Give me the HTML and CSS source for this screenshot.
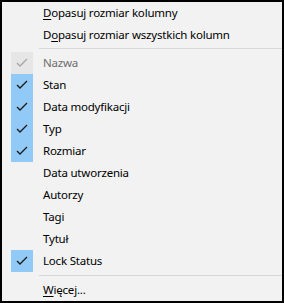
FILE: index.html
```html
<!DOCTYPE html>
<html>
<head>
<meta charset="utf-8">
<link rel="stylesheet" href="styles.css">
</head>
<body>
<div class="menu">
  <div class="item"><span class="check"></span><span class="label"><u>D</u>opasuj rozmiar kolumny</span></div>
  <div class="item"><span class="check"></span><span class="label">D<u>o</u>pasuj rozmiar wszystkich kolumn</span></div>
  <div class="sep"></div>
  <div class="item disabled"><span class="check on"><svg width="22" height="22" viewBox="0 0 22 22"><polyline points="6,11 9,14 16,7" /></svg></span><span class="label">Nazwa</span></div>
  <div class="item"><span class="check on"><svg width="22" height="22" viewBox="0 0 22 22"><polyline points="6,11 9,14 16,7" /></svg></span><span class="label">Stan</span></div>
  <div class="item"><span class="check on"><svg width="22" height="22" viewBox="0 0 22 22"><polyline points="6,11 9,14 16,7" /></svg></span><span class="label">Data modyfikacji</span></div>
  <div class="item"><span class="check on"><svg width="22" height="22" viewBox="0 0 22 22"><polyline points="6,11 9,14 16,7" /></svg></span><span class="label">Typ</span></div>
  <div class="item"><span class="check on"><svg width="22" height="22" viewBox="0 0 22 22"><polyline points="6,11 9,14 16,7" /></svg></span><span class="label">Rozmiar</span></div>
  <div class="item"><span class="check"></span><span class="label">Data utworzenia</span></div>
  <div class="item"><span class="check"></span><span class="label">Autorzy</span></div>
  <div class="item"><span class="check"></span><span class="label">Tagi</span></div>
  <div class="item"><span class="check"></span><span class="label">Tytuł</span></div>
  <div class="item"><span class="check on"><svg width="22" height="22" viewBox="0 0 22 22"><polyline points="6,11 9,14 16,7" /></svg></span><span class="label">Lock Status</span></div>
  <div class="sep sep2"></div>
  <div class="item"><span class="check"></span><span class="label"><u>W</u>ięcej...</span></div>
</div>
</body>
</html>
```

FILE: styles.css
```css
html, body {
  margin: 0;
  padding: 0;
}
body {
  font-family: "Noto Sans", "Open Sans", sans-serif;
  font-size: 11.5px;
  letter-spacing: -0.2px;
  color: #000;
}
.menu {
  width: 284px;
  height: 303px;
  box-sizing: border-box;
  border: 2px solid #000;
  background: #f2f2f2;
  display: flex;
  flex-direction: column;
}
.item {
  height: 22px;
  display: flex;
  align-items: center;
  flex: none;
}
.check {
  width: 22px;
  height: 22px;
  margin-left: 9px;
  margin-right: 10px;
  flex: none;
}
.check svg {
  display: block;
}
.check polyline {
  fill: none;
  stroke: #1a1a1a;
  stroke-width: 1.3;
}
.check.on {
  background: #91c9f7;
}
.disabled .check.on {
  background: #e6e6e6;
}
.disabled .check polyline {
  stroke: #a6a6a6;
}
.disabled .label {
  color: #6d6d6d;
}
.label {
  white-space: nowrap;
  line-height: 22px;
}
.label u {
  text-underline-offset: 2px;
}
.sep {
  height: 6px;
  flex: none;
  display: flex;
  flex-direction: column;
  padding-top: 2px;
  box-sizing: border-box;
  margin-left: 37px;
}
.sep::before {
  content: "";
  display: block;
  height: 1px;
  background: #d7d7d7;
}
.sep2 {
  height: 7px;
  padding-top: 3px;
}
```
